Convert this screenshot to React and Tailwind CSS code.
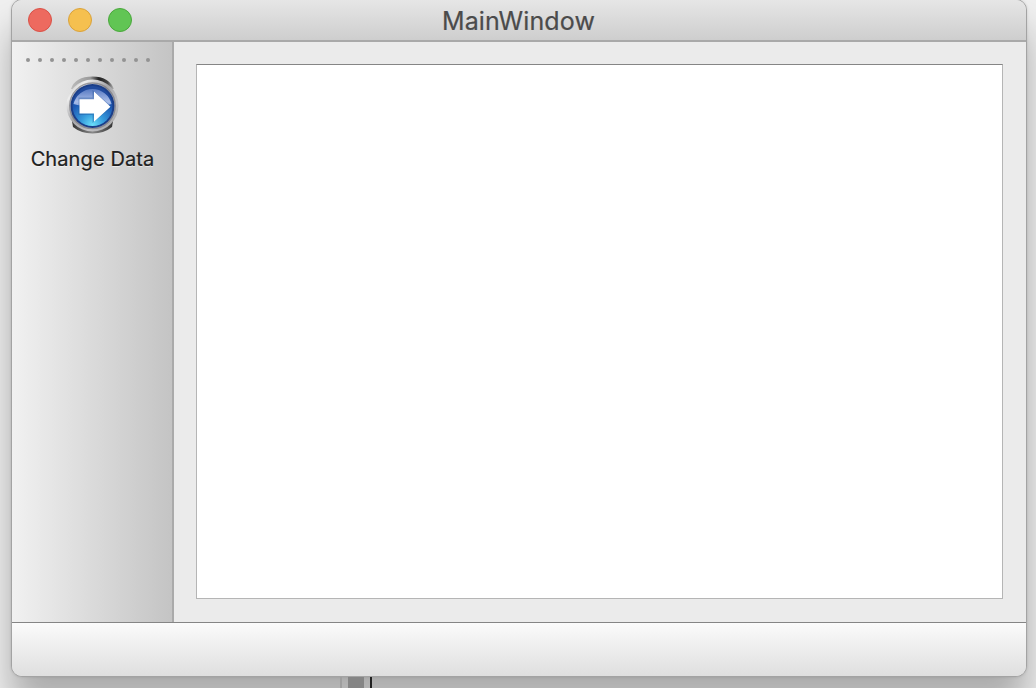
const DOTS = Array.from({ length: 11 }, (_, i) => i);

function TitleBar() {
  return (
    <header className="grid h-[42px] shrink-0 grid-cols-[1fr_auto_1fr] items-center border-b-2 border-[#a9a9a9] bg-linear-to-b from-[#e6e6e6] to-[#cecece] pr-[17px] pl-4">
      <div className="flex gap-4">
        <span className="size-6 rounded-full border border-[#d95147] bg-[#ed6a5f]" />
        <span className="size-6 rounded-full border border-[#d9a23c] bg-[#f5c04f]" />
        <span className="size-6 rounded-full border border-[#4aa73c] bg-[#61c554]" />
      </div>
      <h1 className="pt-[3px] text-[25px] leading-[37px] font-normal tracking-[0.1px] text-[#4b4b4b] [-webkit-text-stroke:0.2px_#4b4b4b]">MainWindow</h1>
      <div />
    </header>
  );
}

function ArrowIcon() {
  return (
    <svg width="58" height="60" viewBox="0 0 58 60" className="block">
      <defs>
        <linearGradient id="rim" x1="0" y1="0" x2="1" y2="1">
          <stop offset="0" stopColor="#999" />
          <stop offset=".2" stopColor="#eee" />
          <stop offset=".45" stopColor="#a5a5a8" />
          <stop offset=".7" stopColor="#c2c2c5" />
          <stop offset="1" stopColor="#999" />
        </linearGradient>
        <linearGradient id="cap" x1="0" x2="1">
          <stop offset="0" stopColor="#bbb" />
          <stop offset=".45" stopColor="#999" />
          <stop offset=".65" stopColor="#222" />
          <stop offset=".85" stopColor="#444" />
          <stop offset="1" stopColor="#bbb" />
        </linearGradient>
        <linearGradient id="base" x1="0" x2="1">
          <stop offset="0" stopColor="#333" />
          <stop offset=".5" stopColor="#888" />
          <stop offset="1" stopColor="#333" />
        </linearGradient>
        <radialGradient id="glass" cx=".5" cy=".98" r=".85">
          <stop offset="0" stopColor="#6be0fa" />
          <stop offset=".35" stopColor="#369bdc" />
          <stop offset=".75" stopColor="#1e5ab4" />
          <stop offset="1" stopColor="#204a9d" />
        </radialGradient>
        <linearGradient id="shine" x1="0" y1="0" x2="0" y2="1">
          <stop offset="0" stopColor="#5679c2" />
          <stop offset=".7" stopColor="#a9bde8" />
          <stop offset="1" stopColor="#7f9fdc" />
        </linearGradient>
      </defs>
      <path d="M8 14Q12 1.5 29.5 1.5Q46 1.5 51 14Z" fill="url(#cap)" />
      <path d="M9 46H50L49 52Q41 58.5 29.5 58.5Q18 58.5 10 52Z" fill="url(#base)" />
      <circle cx="29.5" cy="30.5" r="26" fill="url(#rim)" />
      <circle cx="29.5" cy="30.8" r="22.8" fill="none" stroke="#77777f" strokeWidth="1.4" opacity=".7" />
      <circle cx="29.5" cy="31" r="22" fill="#1b3e88" />
      <circle cx="29.5" cy="31" r="20" fill="url(#glass)" />
      <path d="M10.5 29A19.5 19.5 0 0 1 48.5 29Q38 33 29 32Q18 31 10.5 29Z" fill="url(#shine)" />
      <path d="M15.5 22.5H29.5V15L49 31.7 29.5 48V40H15.5Z" fill="#174b91" opacity=".35" />
      <path d="M16.5 24.3H31V16.5L47.5 31.7 31 46.7V38.5H16.5Z" fill="#fff" />
    </svg>
  );
}

function ToolBar() {
  return (
    <aside className="flex w-[162px] shrink-0 flex-col items-center border-r-2 border-[#aaa] bg-linear-to-r from-[#f1f1f1] to-[#c4c4c4]">
      <div className="mt-4 mr-2 flex w-[128px] gap-2 pl-0.5">
        {DOTS.map((i) => (
          <span key={i} className="size-1 shrink-0 rounded-full bg-[#939393]" />
        ))}
      </div>
      <button type="button" className="mt-[13px] flex flex-col items-center text-[20px] leading-6 tracking-[0.1px] whitespace-nowrap text-[#202020]">
        <ArrowIcon />
        <span className="mt-[12px] pl-px [-webkit-text-stroke:0.2px_#202020] [text-shadow:0_1px_0_#ffffff90]">Change Data</span>
      </button>
    </aside>
  );
}

export default function App() {
  return (
    <div className="flex h-[688px] w-[1036px] flex-col overflow-hidden bg-[#f0f0f0] font-['Inter',sans-serif]">
      <div className="relative -mt-px ml-[11px] flex h-[678px] w-[1016px] shrink-0 flex-col overflow-hidden rounded-[11px] border border-[#a3a3a3] bg-[#ececec] shadow-[0_30px_36px_#0000004a,0_0_3px_#00000020]">
        <TitleBar />
        <div className="flex min-h-0 flex-1">
          <ToolBar />
          <main className="flex flex-1 bg-[#ebebeb] pt-[22px] pr-[23px] pb-[23px] pl-[22px]">
            <div className="flex-1 border border-[#b5b5b5] border-t-[#858585] bg-white" />
          </main>
        </div>
        <footer className="h-[54px] shrink-0 border-t border-[#858585] bg-linear-to-b from-[#fbfbfb] to-[#dfdfdf]" />
      </div>
      <div className="relative ml-[340px] flex h-[11px] shrink-0">
        <span className="w-0.5 bg-[#9e9e9e]" />
        <span className="ml-1.5 w-4 bg-[#858585]" />
        <span className="ml-1.5 w-0.5 bg-[#222]" />
      </div>
    </div>
  );
}
